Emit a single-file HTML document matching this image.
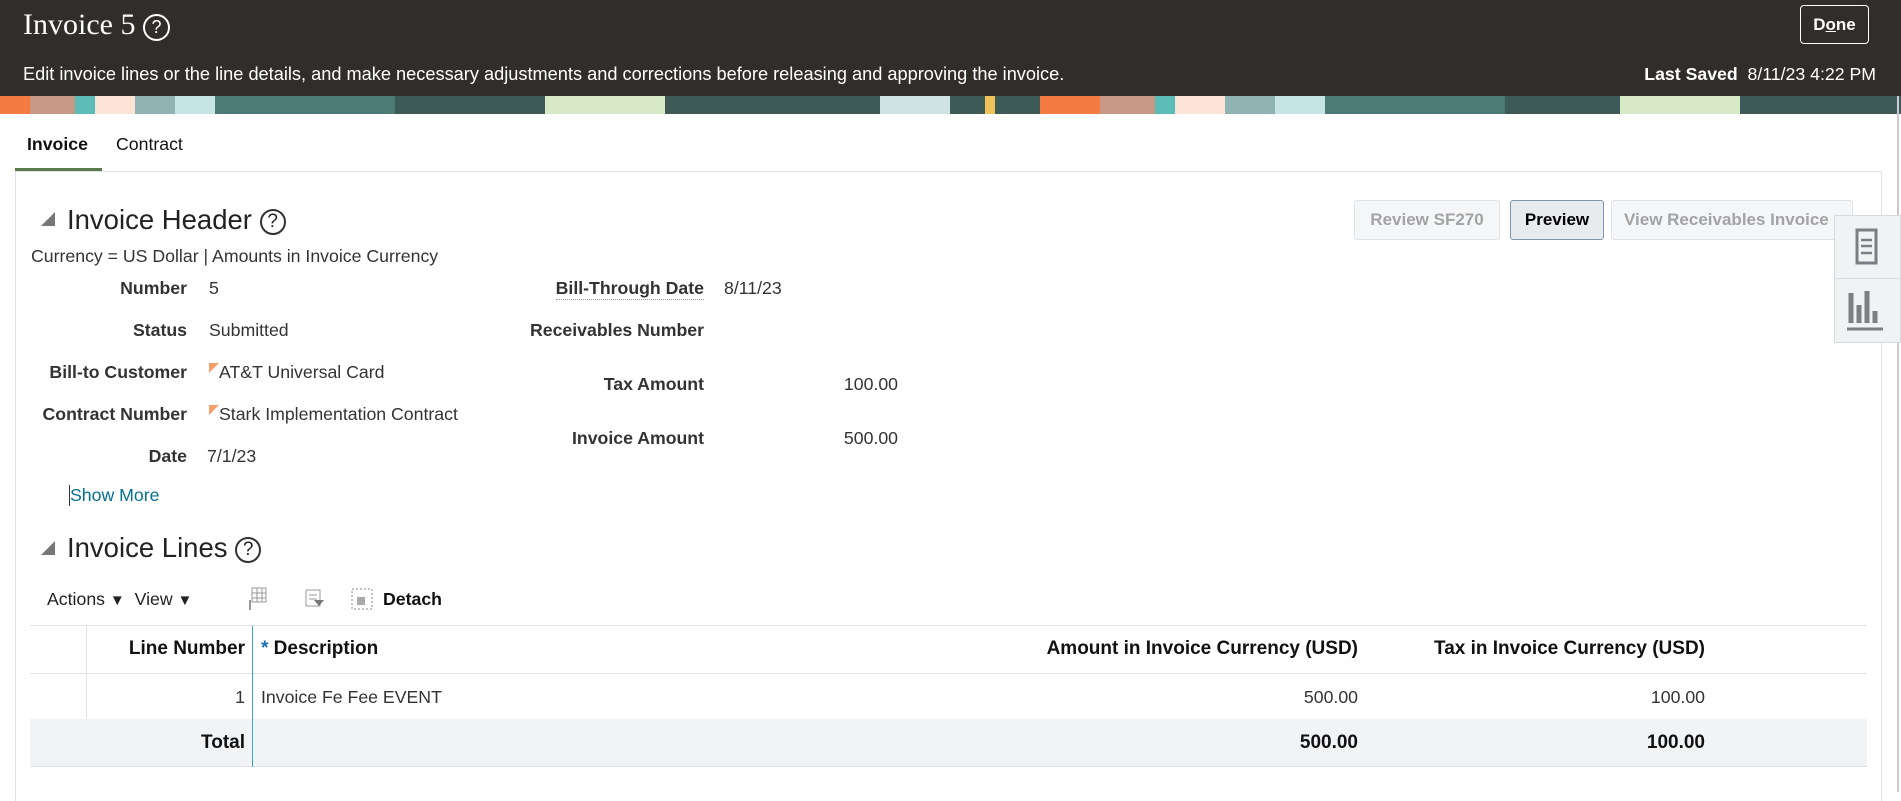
<!DOCTYPE html>
<html><head><meta charset="utf-8"><style>
*{box-sizing:border-box;margin:0;padding:0}
body{width:1901px;height:792px;overflow:hidden;background:#fff;font-family:"Liberation Sans",sans-serif;color:#333;position:relative}
.a{position:absolute;white-space:nowrap}
.hdr{position:absolute;left:0;top:0;width:1901px;height:96px;background:#312d2a}
.ban{position:absolute;left:0;top:96px;width:1901px;height:18px;overflow:hidden;background:#3d5a57}
.lbl{position:absolute;font-size:17.7px;font-weight:bold;color:#333;text-align:right;white-space:nowrap}
.val{position:absolute;font-size:17.7px;color:#333;white-space:nowrap}
.btn{position:absolute;height:40px;border:1px solid #dfe3e8;border-radius:3px;background:#f4f6f8;color:#a3a3a3;font-weight:bold;font-size:17px;text-align:center;line-height:38px}
.help{display:inline-block;width:26px;height:26px;border:2px solid #333;border-radius:50%;text-align:center;font-size:19px;line-height:22px;vertical-align:middle}
.tri{position:absolute;width:0;height:0;border-left:14px solid transparent;border-bottom:14px solid #777}
.flag{display:inline-block;width:0;height:0;border-top:10px solid #f5a06a;border-right:10px solid transparent;vertical-align:top;margin-top:1px}
</style></head><body>
<div class="hdr"></div>
<div class="a" style="left:23px;top:8px;font-family:'Liberation Serif',serif;font-size:30px;color:#fff">Invoice 5 <span class="help" style="border-color:#fff;color:#fff;font-family:'Liberation Sans';width:27px;height:27px;font-size:18px;line-height:23px">?</span></div>
<div class="a" style="left:1800px;top:5px;width:69px;height:39px;border:1px solid #fff;border-radius:4px;color:#fff;font-weight:bold;font-size:17px;text-align:center;line-height:37px">D<span style="text-decoration:underline">o</span>ne</div>
<div class="a" style="left:23px;top:64px;color:#fff;font-size:18.2px">Edit invoice lines or the line details, and make necessary adjustments and corrections before releasing and approving the invoice.</div>
<div class="a" style="right:25px;top:64px;color:#fff;font-size:17.7px"><b>Last Saved</b>&nbsp; 8/11/23 4:22 PM</div>
<div class="ban">
<div class="a" style="left:0;top:0;width:30px;height:18px;background:#f47b42"></div>
<div class="a" style="left:30px;top:0;width:45px;height:18px;background:#c79a85"></div>
<div class="a" style="left:75px;top:0;width:20px;height:18px;background:#5cbcb8"></div>
<div class="a" style="left:95px;top:0;width:40px;height:18px;background:#fde2d6"></div>
<div class="a" style="left:135px;top:0;width:40px;height:18px;background:#8fb3b3"></div>
<div class="a" style="left:175px;top:0;width:40px;height:18px;background:#c6e4e6"></div>
<div class="a" style="left:215px;top:0;width:180px;height:18px;background:#4e7a76"></div>
<div class="a" style="left:545px;top:0;width:120px;height:18px;background:#d8e9c8"></div>
<div class="a" style="left:880px;top:0;width:70px;height:18px;background:#cfe3e5"></div>
<div class="a" style="left:985px;top:0;width:10px;height:18px;background:#f0c35a"></div>
<div class="a" style="left:1040px;top:0;width:60px;height:18px;background:#f47b42"></div>
<div class="a" style="left:1100px;top:0;width:55px;height:18px;background:#c79a85"></div>
<div class="a" style="left:1155px;top:0;width:20px;height:18px;background:#5cbcb8"></div>
<div class="a" style="left:1175px;top:0;width:50px;height:18px;background:#fde2d6"></div>
<div class="a" style="left:1225px;top:0;width:50px;height:18px;background:#8fb3b3"></div>
<div class="a" style="left:1275px;top:0;width:50px;height:18px;background:#c6e4e6"></div>
<div class="a" style="left:1325px;top:0;width:180px;height:18px;background:#4e7a76"></div>
<div class="a" style="left:1620px;top:0;width:120px;height:18px;background:#d8e9c8"></div>
</div>
<div class="a" style="left:1897px;top:96px;width:2px;height:696px;background:#ccc"></div>
<div class="a" style="left:27px;top:134px;font-size:17.7px;font-weight:bold;color:#111">Invoice</div>
<div class="a" style="left:116px;top:134px;font-size:17.7px;color:#111">Contract</div>
<div class="a" style="left:15px;top:168px;width:87px;height:4px;background:#5a7a4b"></div>
<div class="a" style="left:15px;top:171px;width:1867px;height:630px;border:1px solid #dfe3e8;border-bottom:none"></div>

<div class="tri" style="left:41px;top:212px"></div>
<div class="a" style="left:67px;top:204px;font-size:27.5px;color:#222">Invoice Header <span class="help">?</span></div>
<div class="a" style="left:31px;top:246px;font-size:17.7px;color:#333">Currency = US Dollar | Amounts in Invoice Currency</div>

<div class="lbl" style="right:1714px;top:278px">Number</div><div class="val" style="left:209px;top:278px">5</div>
<div class="lbl" style="right:1714px;top:320px">Status</div><div class="val" style="left:209px;top:320px">Submitted</div>
<div class="lbl" style="right:1714px;top:362px">Bill-to Customer</div><div class="val" style="left:209px;top:362px"><span class="flag"></span>AT&amp;T Universal Card</div>
<div class="lbl" style="right:1714px;top:404px">Contract Number</div><div class="val" style="left:209px;top:404px"><span class="flag"></span>Stark Implementation Contract</div>
<div class="lbl" style="right:1714px;top:446px">Date</div><div class="val" style="left:207px;top:446px">7/1/23</div>
<div class="val" style="left:69px;top:485px;color:#04708f;border-left:1px solid #333">Show More</div>

<div class="lbl" style="right:1197px;top:278px;border-bottom:1px dotted #999">Bill-Through Date</div><div class="val" style="left:724px;top:278px">8/11/23</div>
<div class="lbl" style="right:1197px;top:320px">Receivables Number</div>
<div class="lbl" style="right:1197px;top:374px">Tax Amount</div><div class="val" style="right:1003px;top:374px">100.00</div>
<div class="lbl" style="right:1197px;top:428px">Invoice Amount</div><div class="val" style="right:1003px;top:428px">500.00</div>

<div class="btn" style="left:1354px;top:200px;width:146px">Review SF270</div>
<div class="btn" style="left:1510px;top:200px;width:94px;background:#e8ebee;border-color:#7f95ab;color:#000">Preview</div>
<div class="btn" style="left:1611px;top:200px;width:242px;text-align:left;padding-left:12px;overflow:hidden">View Receivables Invoice</div>
<div class="a" style="left:1834px;top:215px;width:67px;height:128px;background:#f1f2f3;border:1px solid #d8dbde"></div>
<div class="a" style="left:1834px;top:278px;width:67px;height:1px;background:#d8dbde"></div>
<svg class="a" style="left:1849px;top:224px" width="34" height="46" viewBox="0 0 34 46"><rect x="8" y="6" width="19" height="33" fill="none" stroke="#7b7f83" stroke-width="3"/><path d="M12 16h11M12 22h11M12 29h11" stroke="#7b7f83" stroke-width="2.5"/></svg>
<svg class="a" style="left:1845px;top:287px" width="42" height="46" viewBox="0 0 42 46"><path d="M6 6v30M14 18v18M22 4v32M30 24v12" stroke="#7b7f83" stroke-width="5"/><path d="M2 42h36" stroke="#7b7f83" stroke-width="3"/></svg>

<div class="tri" style="left:41px;top:541px"></div>
<div class="a" style="left:67px;top:532px;font-size:27.5px;color:#222">Invoice Lines <span class="help">?</span></div>
<div class="a" style="left:47px;top:589px;font-size:17.7px;color:#222">Actions <span style="font-size:15px">▼</span>&nbsp;&nbsp;View <span style="font-size:15px">▼</span></div>
<svg class="a" style="left:246px;top:586px" width="24" height="26"><rect x="6" y="2" width="14" height="14" fill="none" stroke="#999"/><path d="M6 7h14M6 12h14M11 2v14M16 2v14" stroke="#999"/><path d="M4 24v-10" stroke="#999" stroke-width="2"/></svg>
<svg class="a" style="left:304px;top:588px" width="22" height="22"><rect x="2" y="2" width="14" height="16" fill="none" stroke="#999"/><path d="M5 7h8M5 11h8" stroke="#999"/><path d="M10 12h10l-5 6z" fill="#777"/></svg>
<svg class="a" style="left:350px;top:587px" width="24" height="24"><rect x="2" y="2" width="20" height="20" fill="none" stroke="#888" stroke-dasharray="2,2"/><rect x="7" y="10" width="8" height="8" fill="#aaa"/></svg>
<div class="a" style="left:383px;top:589px;font-size:17.7px;font-weight:bold;color:#111">Detach</div>

<div class="a" style="left:30px;top:625px;width:1837px;height:1px;background:#dfe3e8"></div>
<div class="a" style="left:30px;top:673px;width:1837px;height:1px;background:#dfe3e8"></div>
<div class="a" style="left:30px;top:719px;width:1837px;height:48px;background:#f1f3f5;border-bottom:1px solid #dfe3e8"></div>
<div class="a" style="left:86px;top:626px;width:1px;height:93px;background:#dfe3e8"></div>
<div class="a" style="left:252px;top:626px;width:1px;height:141px;background:#3aa5d0"></div>
<div class="a" style="right:1656px;top:638px;font-size:19px;font-weight:bold;color:#111">Line Number</div>
<div class="a" style="left:261px;top:638px;font-size:19px;font-weight:bold;color:#111"><span style="color:#1b6fb5">*</span> Description</div>
<div class="a" style="right:543px;top:638px;font-size:19px;font-weight:bold;color:#111">Amount in Invoice Currency (USD)</div>
<div class="a" style="right:196px;top:638px;font-size:19px;font-weight:bold;color:#111">Tax in Invoice Currency (USD)</div>
<div class="a" style="right:1656px;top:687px;font-size:17.7px">1</div>
<div class="a" style="left:261px;top:687px;font-size:17.7px">Invoice Fe Fee EVENT</div>
<div class="a" style="right:543px;top:687px;font-size:17.7px">500.00</div>
<div class="a" style="right:196px;top:687px;font-size:17.7px">100.00</div>
<div class="a" style="right:1656px;top:732px;font-size:19px;font-weight:bold;color:#111">Total</div>
<div class="a" style="right:543px;top:732px;font-size:19px;font-weight:bold;color:#111">500.00</div>
<div class="a" style="right:196px;top:732px;font-size:19px;font-weight:bold;color:#111">100.00</div>
</body></html>
